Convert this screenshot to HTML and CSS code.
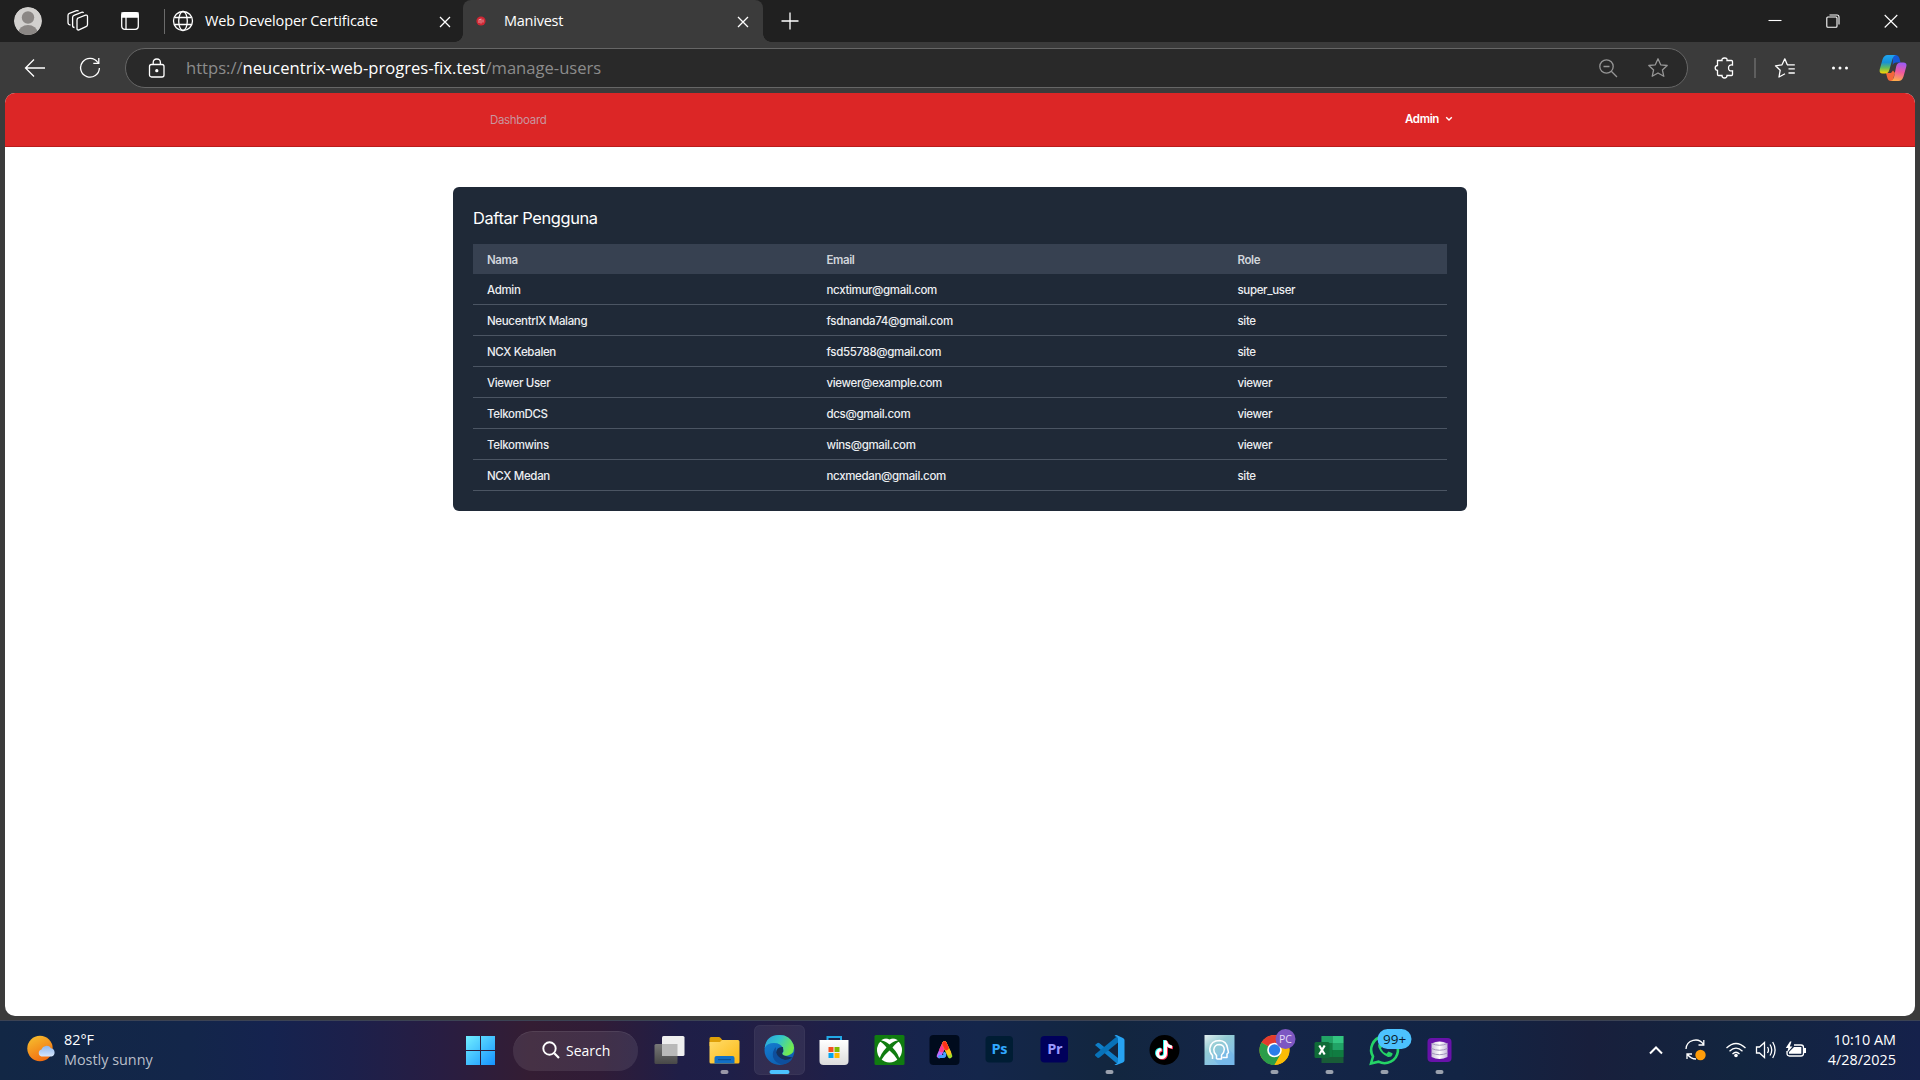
FILE: index.html
```html
<!DOCTYPE html>
<html lang="en">
<head>
<meta charset="utf-8">
<title>Manivest</title>
<link rel="stylesheet" href="styles.css">
</head>
<body>
<div class="browser">
  <header class="tabstrip">
    <svg class="ic" width="30" height="30" viewBox="0 0 30 30"><defs><clipPath id="av"><circle cx="15" cy="15" r="14"/></clipPath></defs><g clip-path="url(#av)"><circle cx="15" cy="15" r="14" fill="#d2d0ce"/><circle cx="15" cy="11.500" r="6.200" fill="#8b8785"/><ellipse cx="15" cy="26.500" rx="9.500" ry="7.500" fill="#8b8785"/></g></svg>
    <svg class="ic line" width="24" height="24" viewBox="0 0 24 24"><path d="M11 9.500 19.500 6.200Q21.500 5.600 21.500 7.500V15.500Q21.500 17 20 17.700L13 20.800Q11 21.500 11 19.500V11Q11 9.700 12.200 9.100M8.500 18.500Q6.600 18.500 6.600 16.500V8.500Q6.600 7 8 6.400L15.500 3.300Q17 2.800 17.500 4M4.500 16Q2 16 2 13.500V6.500Q2 5 3.400 4.400L10.500 1.700Q12 1.200 12.500 2.300"/></svg>
    <svg class="ic line" width="20" height="20" viewBox="0 0 20 20"><rect x="1.700" y="1.700" width="16.600" height="16.600" rx="3"/><path d="M2 2H18V6H2Z" fill="#fff"/><path d="M6 6V18"/></svg>
    <i class="vsep tall"></i>
    <div class="tab">
      <svg class="line" width="22" height="22" viewBox="0 0 22 22"><circle cx="11" cy="11" r="9.500"/><ellipse cx="11" cy="11" rx="4.300" ry="9.500"/><path d="M2.500 7.500H19.500M2.500 14.500H19.500"/></svg>
      <span class="tab-title">Web Developer Certificate</span>
      <svg class="line tab-x" width="12" height="12" viewBox="0 0 12 12"><path d="M1 1 11 11M11 1 1 11"/></svg>
    </div>
    <div class="tab active">
      <svg class="fav" width="10" height="10" viewBox="0 0 10 10"><circle cx="5" cy="5" r="4.600" fill="#cf2734"/><path d="M3 3.500V7M5 2.500V7.500M7 3.500V6.500M3 3.500H5" stroke="#e9a5a9" stroke-width=".9" fill="none"/></svg>
      <span class="tab-title">Manivest</span>
      <svg class="line tab-x" width="12" height="12" viewBox="0 0 12 12"><path d="M1 1 11 11M11 1 1 11"/></svg>
    </div>
    <svg class="ic line" width="18" height="18" viewBox="0 0 18 18"><path d="M9 .5V17.500M.5 9H17.500"/></svg>
    <span></span>
    <svg class="ic line thin" width="14" height="14" viewBox="0 0 14 14"><path d="M.5 6.500H13.500"/></svg>
    <svg class="ic line thin" width="14" height="14" viewBox="0 0 14 14"><rect x=".8" y="3" width="10.200" height="10.200" rx="1"/><path d="M3.500 1H11Q13 1 13 3V10.500"/></svg>
    <svg class="ic line thin" width="14" height="14" viewBox="0 0 14 14"><path d="M.7 1 13.300 13.500M13.300 1 .7 13.500"/></svg>
  </header>

  <div class="toolbar">
    <svg class="ic line" width="22" height="20" viewBox="0 0 22 20"><path d="M21 10H1.500M10 1.500 1.500 10 10 18.500"/></svg>
    <svg class="ic line" width="22" height="22" viewBox="0 0 22 22"><path d="M18.800 5.500A9.400 9.400 0 1 0 20.400 11M19.800 1V6.300H14.300"/></svg>
    <div class="address">
      <svg class="line" width="18" height="20" viewBox="0 0 18 20"><rect x="1.500" y="6.500" width="14.500" height="12.500" rx="2"/><path d="M5.200 6.500V4.500Q5.200 1 8.800 1T12.400 4.500V6.500"/><circle cx="8.800" cy="12.700" r="1" fill="#fff"/></svg>
      <p class="url">https://<b>neucentrix-web-progres-fix.test</b>/manage-users</p>
      <svg class="line dim" width="20" height="20" viewBox="0 0 20 20"><circle cx="8.500" cy="8.500" r="6.700"/><path d="M13.300 13.300 19 19M5.500 8.500H11.500"/></svg>
      <svg class="line dim" width="22" height="22" viewBox="0 0 22 22"><path d="M11 1.800 13.700 7.800 20.200 8.500 15.400 12.900 16.800 19.300 11 16 5.200 19.300 6.600 12.900 1.800 8.500 8.300 7.800Z" stroke-linejoin="round"/></svg>
    </div>
    <svg class="ic line" width="22" height="22" viewBox="0 0 22 22"><path d="M3.500 3.500H8Q7.500 1.200 10.500 1T13 3.500H17.500Q18.500 3.500 18.500 4.500V8Q14.500 7.500 14.500 11T18.500 13.800V17.500Q18.500 18.500 17.500 18.500H13Q13 21 10.500 21T8 18.500H4.500Q3.500 18.500 3.500 17.500V13.300Q1.200 13.300 1.200 11T3.500 8.500Z"/></svg>
    <i class="vsep"></i>
    <svg class="ic line" width="22" height="22" viewBox="0 0 22 22"><path d="M13.300 7.800 10.800 1.800 8 7.800 1.500 8.800 6.200 13.200 5 20 11 16.800M13 7.800H20.800M14.500 11.800H20.800M14.500 16H20.800" stroke-linejoin="round"/></svg>
    <svg class="ic" width="18" height="6" viewBox="0 0 18 6" fill="#fff"><circle cx="2.500" cy="3" r="1.500"/><circle cx="9" cy="3" r="1.500"/><circle cx="15.500" cy="3" r="1.500"/></svg>
    <svg class="ic" width="28" height="28" viewBox="0 0 28 28"><defs><linearGradient id="c1" x1="0" y1="0" x2="0" y2="1"><stop stop-color="#1fa5f0"/><stop offset=".4" stop-color="#1691d8"/><stop offset=".7" stop-color="#65bd58"/><stop offset="1" stop-color="#ffd400"/></linearGradient><linearGradient id="c2" x1=".6" y1="0" x2=".4" y2="1"><stop stop-color="#9c5bf5"/><stop offset=".5" stop-color="#f0589e"/><stop offset="1" stop-color="#ffad4a"/></linearGradient></defs><path d="M14 1H16.500Q19.500 1 20.500 4.500L21.500 8.500H17Q14.500 8.500 13.700 11Z" fill="#1558d6"/><path d="M7 19H12L14 16.500 16 19 13.500 27H12Q9 27 8.200 23.500Z" fill="#f4673a"/><path d="M8.500 1H17Q14.500 1.500 13.500 5L10.300 16Q9.400 19.500 6 19.500H3.500Q0 19.500.7 15.500L3.500 5.500Q5 1 8.500 1Z" fill="url(#c1)"/><path d="M19.500 27H12Q14 26.500 15 23L17.300 12Q18.300 8.500 21.500 8.500H24.500Q28.200 8.500 27.300 12.500L24.500 22.500Q23 27 19.500 27Z" fill="url(#c2)"/></svg>
  </div>

  <main class="page">
    <nav class="nav">
      <a class="nav-link">Dashboard</a>
      <button class="user">Admin<svg width="8" height="6" viewBox="0 0 8 6"><path d="M1.200 1.200 4 4 6.800 1.200" fill="none" stroke="#fff" stroke-width="1.400"/></svg></button>
    </nav>
    <section class="card">
      <h1>Daftar Pengguna</h1>
      <table>
        <thead><tr><th>Nama</th><th>Email</th><th>Role</th></tr></thead>
        <tbody>
          <tr><td>Admin</td><td>ncxtimur@gmail.com</td><td>super_user</td></tr>
          <tr><td>NeucentrIX Malang</td><td>fsdnanda74@gmail.com</td><td>site</td></tr>
          <tr><td>NCX Kebalen</td><td>fsd55788@gmail.com</td><td>site</td></tr>
          <tr><td>Viewer User</td><td>viewer@example.com</td><td>viewer</td></tr>
          <tr><td>TelkomDCS</td><td>dcs@gmail.com</td><td>viewer</td></tr>
          <tr><td>Telkomwins</td><td>wins@gmail.com</td><td>viewer</td></tr>
          <tr><td>NCX Medan</td><td>ncxmedan@gmail.com</td><td>site</td></tr>
        </tbody>
      </table>
    </section>
  </main>
</div>

<footer class="taskbar">
  <div class="weather">
    <svg width="30" height="28" viewBox="0 0 30 28"><defs><linearGradient id="sun" x1=".2" y1="0" x2=".7" y2="1"><stop stop-color="#f6bd2e"/><stop offset="1" stop-color="#f2690f"/></linearGradient><linearGradient id="cl" x1="0" y1="0" x2="0" y2="1"><stop stop-color="#8fb7ee"/><stop offset="1" stop-color="#d5e5fb"/></linearGradient></defs><circle cx="13" cy="13.500" r="12.700" fill="url(#sun)"/><path d="M14.500 21.500A3.600 3.600 0 0 1 14.500 14.500 5.300 5.300 0 0 1 24 13.300 4.200 4.200 0 0 1 24.500 21.500Z" fill="url(#cl)"/></svg>
    <p>82°F<br><span>Mostly sunny</span></p>
  </div>
  <div class="apps">
    <svg viewBox="0 0 55 59"><defs><linearGradient id="w" gradientUnits="userSpaceOnUse" x1="13" y1="14" x2="42" y2="44"><stop stop-color="#73f0ff"/><stop offset="1" stop-color="#1593ff"/></linearGradient></defs><path fill="url(#w)" d="M13 15H27V29H13ZM28 15H42V29H28ZM13 30H27V44H13ZM28 30H42V44H28Z"/></svg>
    <div class="search"><svg width="18" height="18" viewBox="0 0 18 18"><path d="M12.300 12.300 17 17" stroke="#fff" stroke-width="2.200"/><circle cx="7.500" cy="7.500" r="6.200" fill="none" stroke="#fff" stroke-width="1.900"/></svg>Search</div>
    <svg viewBox="0 0 55 59"><defs><linearGradient id="tv" x1="0" y1="0" x2="0" y2="1"><stop stop-color="#777"/><stop offset="1" stop-color="#484848"/></linearGradient></defs><rect x="12.500" y="23" width="23" height="20" rx="1.500" fill="url(#tv)"/><rect x="20" y="15" width="22.500" height="20" rx="1.500" fill="#efefef"/><path d="M20 23H35.500V35H20Z" fill="#b9b9b9"/></svg>
    <svg viewBox="0 0 55 59"><defs><linearGradient id="fo" x1="0" y1="0" x2="1" y2="1"><stop stop-color="#ffdc6b"/><stop offset="1" stop-color="#fcb813"/></linearGradient></defs><path d="M12.500 17.500Q12.500 16 14 16H22Q23 16 24.500 18L26 20H27V25H12.500Z" fill="#dfa008"/><path d="M12.500 21H23L25 19H41Q42.500 19 42.500 20.500V41Q42.500 42.500 41 42.500H14Q12.500 42.500 12.500 41Z" fill="url(#fo)"/><path d="M17.500 42.500V37Q17.500 35 19.500 35H35.500Q37.500 35 37.500 37V42.500Z" fill="#1270c6"/><path d="M21 38.700H34" stroke="#0b4a8c"/><rect x="23.500" y="49" width="8" height="4" rx="2" fill="#9a98a8"/></svg>
    <svg viewBox="0 0 55 59"><defs><linearGradient id="e1" x1="0" y1="0" x2="1" y2=".4"><stop stop-color="#2c9fe0"/><stop offset=".5" stop-color="#32c6cb"/><stop offset="1" stop-color="#72ea50"/></linearGradient><linearGradient id="e2" x1="0" y1="0" x2=".6" y2="1"><stop stop-color="#1683d8"/><stop offset="1" stop-color="#0d5eaf"/></linearGradient></defs><rect x="2.500" y="4.500" width="50" height="49" rx="5" fill="#fff" fill-opacity=".07" stroke="#fff" stroke-opacity=".07"/><circle cx="27.500" cy="29" r="15" fill="url(#e2)"/><path d="M12.700 27Q14 14 27.500 14 38 14 41.500 23.500 44 32 36 34.500 30 35.500 30 33 32 31 31 27.500 29 22 22 22 15 22 12.700 27Z" fill="url(#e1)"/><path d="M31 26Q24.500 25.500 24 32 24.500 38 33 39 37 39 40.500 36.500 36 36 32 34.500 28.500 32.500 31.300 30.500Z" fill="#15315c"/><path d="M24 26Q20 30 21 36 23 42 30 43.500 37 43 40.500 37.500 36 40 31 38.500 25 36 24 31 23.500 28 24 26Z" fill="#0e4f9d"/><rect x="17.500" y="49" width="20" height="4" rx="2" fill="#4cc2ff"/></svg>
    <svg viewBox="0 0 55 59"><defs><linearGradient id="st" x1="0" y1="0" x2="0" y2="1"><stop stop-color="#fff"/><stop offset="1" stop-color="#dcdcdc"/></linearGradient></defs><path d="M20.500 21V16H34V21" fill="none" stroke="#22a8e6" stroke-width="2"/><path d="M12.500 19H41.500V40Q41.500 44 37.500 44H16.500Q12.500 44 12.500 40Z" fill="url(#st)"/><path fill="#f25022" d="M21.500 26h5v5h-5z"/><path fill="#7fba00" d="M27.500 26h5v5h-5z"/><path fill="#00a4ef" d="M21.500 32h5v5h-5z"/><path fill="#ffb900" d="M27.500 32h5v5h-5z"/></svg>
    <svg viewBox="0 0 55 59"><rect x="12.500" y="14" width="30" height="30" rx="1.500" fill="#107c10"/><circle cx="27.500" cy="29" r="12.500" fill="#fff"/><path d="M18.300 19.500Q22 19 27.500 23.500 33 19 36.700 19.500L37.500 20.500Q35 21 30.500 26.500 37.500 34 37.200 38.500L36 39.500Q33 34 27.500 29.500 22 34 19 39.500L17.800 38.500Q17.500 34 24.500 26.500 20 21 17.500 20.500Z" fill="#107c10"/><path d="M21.500 17.500Q25 17 27.500 18.500 30 17 33.500 17.500 30.500 15.700 27.500 15.700T21.500 17.500Z" fill="#107c10"/></svg>
    <svg viewBox="0 0 55 59"><rect x="12.500" y="14" width="30" height="30" rx="4" fill="#000b1d"/><path d="M22 35 27.500 22.700" stroke="#bf6bff" stroke-width="4.600" stroke-linecap="round"/><path d="M22.500 35.500H26Q28.500 35.500 27.500 32.500" stroke="#48a0ff" stroke-width="3" stroke-linecap="round" fill="none"/><path d="M24.500 29 27.500 22.700" stroke="#ff3a8c" stroke-width="4.600" stroke-linecap="round"/><path d="M27.500 22.700 33 35" stroke="#a4dc28" stroke-width="4.600" stroke-linecap="round"/><path d="M27.500 22.700 32 32" stroke="#ffc21a" stroke-width="4.600" stroke-linecap="round"/><path d="M27.500 22.700 29.500 27" stroke="#ff301c" stroke-width="4.600" stroke-linecap="round"/></svg>
    <svg viewBox="0 0 55 59"><rect x="13.500" y="15" width="27.500" height="26.500" rx="4" fill="#001d34"/><text x="27.300" y="33" class="adobe ps">Ps</text></svg>
    <svg viewBox="0 0 55 59"><rect x="13.500" y="15" width="27.500" height="26.500" rx="4" fill="#00005b"/><text x="27.700" y="33" class="adobe pr">Pr</text></svg>
    <svg viewBox="0 0 55 59"><path d="M13 24 15.500 22Q16.500 21.500 17.500 22.300L36 37V43.500Z" fill="#0f7fc9"/><path d="M13 34.500 15.500 36.700Q16.500 37.300 17.500 36.500L36 21.500V14.500L13.200 33.200Z" fill="#0872b8"/><path d="M34.500 14 41 17Q42.500 17.800 42.500 19V39.500Q42.500 40.700 41 41.500L34.500 44Q33.300 44.300 32.500 43.500 36 42.500 36 40V18Q36 15.500 32.500 15 33.300 13.700 34.500 14Z" fill="#27a3f2"/><rect x="23.500" y="49" width="8" height="4" rx="2" fill="#9aa1ae"/></svg>
    <svg viewBox="0 0 55 59"><circle cx="27.500" cy="29" r="15" fill="#000"/><g fill="none" stroke-width="3"><path d="M28.500 19.500V32.500A4 4 0 1 1 24.500 28.500M28.500 20Q29.500 25.500 35 26" stroke="#25f4ee" transform="translate(-1 -.6)"/><path d="M28.500 19.500V32.500A4 4 0 1 1 24.500 28.500M28.500 20Q29.500 25.500 35 26" stroke="#fe2c55" transform="translate(1 .8)"/><path d="M28.500 19.500V32.500A4 4 0 1 1 24.500 28.500M28.500 20Q29.500 25.500 35 26" stroke="#fff"/></g></svg>
    <svg viewBox="0 0 55 59"><defs><linearGradient id="hd" x1="0" y1="0" x2=".7" y2="1"><stop stop-color="#e3eeee"/><stop offset=".4" stop-color="#93ccd4"/><stop offset="1" stop-color="#7fbdee"/></linearGradient></defs><path d="M12.500 14h30v30h-30z" fill="url(#hd)"/><path d="M22 39 27 44H42V34L36 27Z" fill="#6fb4e8" opacity=".6"/><path d="M20.500 38V34.500Q17.500 31.500 17.800 27.500 19 19.500 27.500 19.500 34.500 20 35.500 27L36.500 31.500 35 33V36.500H30.500M24.500 38V34.500Q21.500 31.500 21.800 28.500 22.500 23.500 27.500 23.500 32.200 24 32.300 28.500 32.300 31.500 29.500 34V38H24.500" fill="none" stroke="#fff" stroke-width="1.500" stroke-linejoin="round"/></svg>
    <svg viewBox="0 0 55 59"><circle cx="27.500" cy="29" r="15" fill="#fbbc05"/><path d="M27.500 29 14.500 21.500A15 15 0 0 1 40.500 21.500Z" fill="#e33b2e"/><path d="M14.500 21.500A15 15 0 0 0 27.500 44L34 32.700 27.500 29Z" fill="#2a9d4a"/><path d="M27.500 22H40.800A15 15 0 0 1 27.500 44L34 32.500Z" fill="#fbbc05"/><circle cx="27.500" cy="29" r="7.300" fill="#fff"/><circle cx="27.500" cy="29" r="5.700" fill="#2b7de9"/><circle cx="38.500" cy="18" r="10" fill="#7d57c2"/><text x="38.500" y="22" class="pc">PC</text><rect x="23.500" y="49" width="8" height="4" rx="2" fill="#9aa1ae"/></svg>
    <svg viewBox="0 0 55 59"><path d="M19.500 15H41.500V42H19.500Z" fill="#185c37"/><path d="M19.500 15H30.500V22H19.500Z" fill="#21a366"/><path d="M30.500 15H41.500V22H30.500Z" fill="#33c481"/><path d="M19.500 22H30.500V36H19.500Z" fill="#107c41"/><path d="M30.500 22H41.500V29H30.500Z" fill="#21a366"/><path d="M30.500 29H41.500V36H30.500Z" fill="#107c41"/><rect x="12.500" y="21" width="15" height="16" rx="1.500" fill="#0f6b38"/><path d="M17.300 24.500 22.700 33.500M22.700 24.500 17.300 33.500" stroke="#fff" stroke-width="2.200"/><rect x="23.500" y="49" width="8" height="4" rx="2" fill="#9aa1ae"/></svg>
    <svg viewBox="0 0 55 59"><path d="M14 42.500 16 35.500A13.400 13.400 0 1 1 21.500 40.700Z" fill="#12284a" stroke="#25d366" stroke-width="2.600"/><path d="M22 22Q20.500 23.500 21.500 26.500 24 33 31 36 34.500 36.500 35.500 33.500V32.300L31.500 30.500 29.500 32.800Q25.500 31 24 27.500L25.300 25.500 23.800 21.700Z" fill="#25d366"/><rect x="20.500" y="8" width="34" height="20" rx="10" fill="#4cc2ff"/><text x="37.700" y="23" class="count">99+</text><rect x="23.500" y="49" width="8" height="4" rx="2" fill="#9aa1ae"/></svg>
    <svg viewBox="0 0 55 59"><defs><linearGradient id="db"><stop stop-color="#c9c0d8"/><stop offset=".5" stop-color="#fff"/><stop offset="1" stop-color="#c4b8da"/></linearGradient></defs><rect x="15.500" y="17" width="24" height="24" rx="4" fill="#6812aa"/><path d="M19.500 22.500V36Q27.500 40 35.500 36V22.500Q27.500 18.500 19.500 22.500Z" fill="url(#db)"/><path d="M19.500 22.500Q27.500 26 35.500 22.500M19.500 27.500Q27.500 31 35.500 27.500M19.500 32Q27.500 35.500 35.500 32" fill="none" stroke="#a295bb"/><rect x="23.500" y="49" width="8" height="4" rx="2" fill="#9aa1ae"/></svg>
  </div>
  <div class="tray">
    <svg width="16" height="12" viewBox="0 0 16 12"><path d="M2 9.500 8 3.500 14 9.500" fill="none" stroke="#fff" stroke-width="2"/></svg>
    <svg class="line" width="24" height="24" viewBox="0 0 24 24"><path d="M2 11A9.500 9.500 0 0 1 19.500 6.500M19.800 2V7H14.500M12 21Q7 21 3.500 16.500M3 21V16H8"/><circle cx="16.500" cy="17" r="5.200" fill="#ff9d0a" stroke="none"/></svg>
    <svg class="line wifi" width="22" height="18" viewBox="0 0 22 18"><path d="M1.500 7Q11-2 20.500 7M4.500 10.200Q11 4 17.500 10.200M7.500 13Q11 9.500 14.500 13"/><circle cx="11" cy="14.500" r="1.800" fill="#fff" stroke="none"/></svg>
    <svg class="line" width="22" height="20" viewBox="0 0 22 20"><path d="M1.500 7V13H4.500L9.500 17.500V2.500L4.500 7ZM12.500 7Q14.500 10 12.500 13M15 4.500Q18.500 10 15 15.500M17.700 2Q22.500 10 17.700 18"/></svg>
    <svg class="line" width="22" height="18" viewBox="0 0 22 18"><path d="M9 4H16Q18.500 4 18.500 6.500V12.500Q18.500 15 16 15H4.500Q2 15 2 12.500V10"/><path d="M9 6H16.300V12.800H4V11Z" fill="#fff" stroke="none"/><path d="M20 7V12" stroke-width="2"/><path d="M5 .5.8 7H3.300L2 12 7.500 5.500H4.800L6.500.5Z" fill="#fff" stroke="none"/></svg>
    <p>10:10 AM<br>4/28/2025</p>
  </div>
</footer>
</body>
</html>
```
FILE: styles.css
```css
* { box-sizing: border-box; }

body {
  margin: 0;
  height: 1080px;
  overflow: hidden;
  display: flex;
  flex-direction: column;
  font-family: "Open Sans", "Noto Sans", sans-serif;
  color: #fff;
}

p { margin: 0; }
svg { display: block; flex: none; }
.line { fill: none; stroke: #fff; stroke-width: 1.3; }
.line.thin { stroke-width: 1.1; }
.line.dim { stroke: #969696; }
.ic { justify-self: center; }
.vsep { justify-self: center; width: 2px; height: 20px; background: #5e5e5e; }
.vsep.tall { width: 1px; height: 25px; background: #6b6b6b; }

/* Browser window */
.browser {
  height: 1020px;
  background: #3b3b3b;
}

.tabstrip {
  display: grid;
  align-items: center;
  height: 42px;
  background: #202020;
  grid-template-columns: 56px 44px 60px 8px 295px 300px 53px 1fr 58px 58px 58px;
}

.tab {
  display: flex;
  align-items: center;
  height: 42px;
  padding: 0 12px 0 4px;
  font-size: 14.5px;
  letter-spacing: -.14px;
}
.tab-title { margin: -2px 0 0 11px; }
.tab-x { margin: 2px 0 0 auto; }
.tab.active {
  position: relative;
  padding: 0 14px 0 13px;
  background: #3b3b3b;
  border-radius: 8px 8px 0 0;
  letter-spacing: -.25px;
}
.active .tab-title { margin-left: 18px; }
.tab.active::before,
.tab.active::after {
  content: "";
  position: absolute;
  bottom: 0;
  width: 8px;
  height: 8px;
}
.tab.active::before { left: -8px; background: radial-gradient(circle at 0 0, #202020 7.5px, #3b3b3b 8px); }
.tab.active::after { right: -8px; background: radial-gradient(circle at 100% 0, #202020 7.5px, #3b3b3b 8px); }

.toolbar {
  display: grid;
  align-items: center;
  height: 51px;
  padding-left: 8px;
  grid-template-columns: 54px 63px 1575px 50px 10px 50px 60px 46px;
}
.toolbar > :nth-child(2) { margin-right: 7px; }

.address {
  display: flex;
  align-items: center;
  height: 40px;
  margin: 1px 12px 0 0;
  padding: 0 18px 0 22px;
  border: 1px solid #666;
  border-radius: 20px;
  background: #292929;
}
.url {
  flex: 1;
  margin-left: 20px;
  font-size: 16.6px;
  line-height: 24px;
  color: #8c8c8c;
}
.url b { font-weight: 400; color: #fff; }
.address .dim + .dim { margin-left: 29px; }

/* Web page */
.page {
  height: 923px;
  margin: 0 5px;
  overflow: hidden;
  border-radius: 10px;
  background: #fff;
  font-family: Inter, "Open Sans", sans-serif;
  font-size: 11.5px;
  letter-spacing: -.28px;
}

.nav {
  display: flex;
  align-items: center;
  justify-content: space-between;
  height: 54px;
  padding: 0 462px 0 485px;
  background: #dc2626;
  border-bottom: 1px solid #b91c1c;
}
.nav-link { color: #c9959f; font-size: 11.5px; letter-spacing: -.32px; }
.user {
  display: flex;
  align-items: center;
  gap: 6px;
  margin-top: -2px;
  padding: 0;
  border: 0;
  background: none;
  color: #fff;
  font: 600 11.5px Inter, sans-serif;
  letter-spacing: -.35px;
}

.card {
  width: 1014px;
  height: 324px;
  margin: 40px auto 0;
  padding: 20px;
  border-radius: 6px;
  background: #1f2937;
}
.card h1 {
  margin: 0 0 13px;
  font-size: 16.4px;
  font-weight: 400;
  line-height: 22px;
  padding-bottom: 2px;
  letter-spacing: -.38px;
}
table {
  width: 974px;
  table-layout: fixed;
  border-collapse: separate;
  border-spacing: 0;
}
th, td { padding: 0 14px; text-align: left; }
th:nth-child(1) { width: 339.5px; }
th:nth-child(2) { width: 411px; }
th { height: 30px; padding-top: 1px; background: #374151; color: #d1d5db; font-weight: 600; letter-spacing: -.4px; }
td { height: 31px; padding-top: 1px; border-bottom: 1px solid #4b5563; color: #eceef1; font-weight: 500; letter-spacing: -.34px; }

/* Taskbar */
.taskbar {
  display: grid;
  grid-template-columns: 453px 1fr auto;
  align-items: center;
  height: 60px;
  border-top: 1px solid #3c4354;
  background: linear-gradient(90deg, #122745 0, #13264a 190px, #15234f 270px, #1c204b 350px, #281d42 440px, #341d33 530px, #301c37 600px, #1f1e47 680px, #1e1f48 730px, #251e43 780px, #1e2049 830px, #16244c 920px, #14264b 980px, #12263f 1110px, #142548 1250px, #122444 1460px, #181f3c 1590px, #12253f 1740px, #15214b 1920px);
  font-size: 14.4px;
  line-height: 20px;
}
.weather { display: flex; align-items: center; padding-left: 27px; }
.weather p { margin: -2px 0 0 7px; }
.weather span { color: #b9bfca; }
.weather svg { margin-top: -3px; }

.apps { display: flex; align-items: center; }
.apps > svg { width: 55px; height: 59px; overflow: visible; }
.search {
  display: flex;
  align-items: center;
  gap: 6px;
  width: 125px;
  height: 40px;
  margin: 0 4px 0 5px;
  padding-left: 29px;
  border-radius: 20px;
  background: rgba(255, 255, 255, .09);
  border-top: 1px solid rgba(255, 255, 255, .08);
  font-size: 14px;
}
.search svg { margin-top: -2px; }
.apps > svg:nth-of-type(n+2) { margin-left: -.5px; margin-right: .5px; }
.adobe { font: 700 14.5px "Open Sans", sans-serif; text-anchor: middle; letter-spacing: -.3px; }
.ps { fill: #31a8ff; }
.pr { fill: #9999ff; }
.pc { font: 10.500px "Open Sans", sans-serif; fill: #e6dcf8; text-anchor: middle; }
.count { font: 13.5px "Open Sans", sans-serif; fill: #0b1b2b; text-anchor: middle; }

.tray { display: flex; align-items: center; padding-right: 24px; }
.tray svg { margin-top: -1px; }
.tray svg:nth-child(2) { margin-left: 20px; }
.tray .wifi { margin-left: 17px; }
.tray svg:nth-child(n+4) { margin-left: 8px; }
.tray p { width: 70px; margin: -2px 0 0 19px; text-align: right; white-space: nowrap; }
```
